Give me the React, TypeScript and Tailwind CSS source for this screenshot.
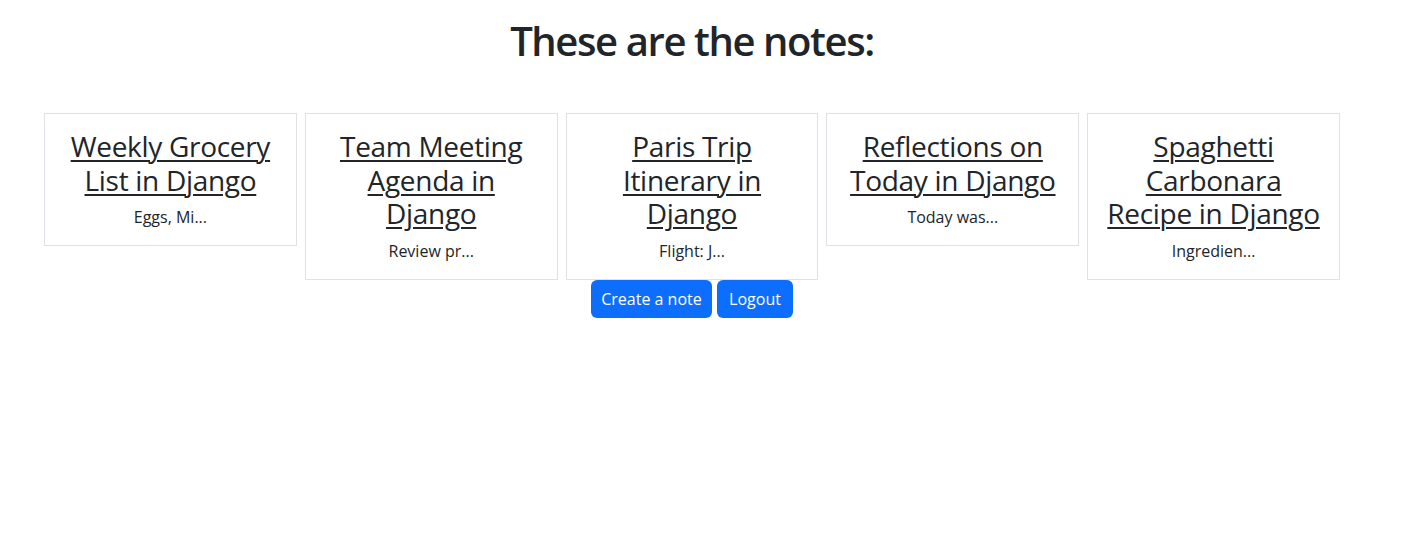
const notes = [
  { title: ["Weekly Grocery", "List in Django"], body: "Eggs, Mi..." },
  { title: ["Team Meeting", "Agenda in", "Django"], body: "Review pr..." },
  { title: ["Paris Trip", "Itinerary in", "Django"], body: "Flight: J..." },
  { title: ["Reflections on", "Today in Django"], body: "Today was..." },
  { title: ["Spaghetti", "Carbonara", "Recipe in Django"], body: "Ingredien..." },
]

function NoteCard({ title, body }: { title: string[]; body: string }) {
  return (
    <div className="w-[252.8px] shrink-0 border border-[#dee2e6] bg-white px-4 pt-4 text-center">
      <h3 className="mb-2 text-[28px] leading-[1.2] font-normal tracking-[-0.3px]">
        <a href="#" className="text-[#212529] underline decoration-2 underline-offset-[3px]">
          {title.map((line, i) => (
            <span key={i}>
              {i > 0 && <br />}
              {line}
            </span>
          ))}
        </a>
      </h3>
      <p className="mb-4 text-[16px] leading-6">{body}</p>
    </div>
  )
}

export default function App() {
  return (
    <div
      className="min-h-[552px] bg-white pt-[17px] text-[#212529]"
      style={{ fontFamily: '"Open Sans", "Noto Sans", sans-serif' }}
    >
      <div className="ml-[44px] w-[1296px]">
        <h1 className="text-center text-[40px] leading-[48px] font-semibold tracking-[-1.4px]">These are the notes:</h1>
        <div className="mt-[48px] flex items-start gap-2">
          {notes.map((n, i) => (
            <NoteCard key={i} title={n.title} body={n.body} />
          ))}
        </div>
        <div className="flex justify-center gap-[5px]">
          <button className="h-[38px] w-[121px] rounded-[6px] bg-[#0d6efd] text-[16px] text-white">
            Create a note
          </button>
          <button className="h-[38px] w-[76px] rounded-[6px] bg-[#0d6efd] text-[16px] text-white">
            Logout
          </button>
        </div>
      </div>
    </div>
  )
}
